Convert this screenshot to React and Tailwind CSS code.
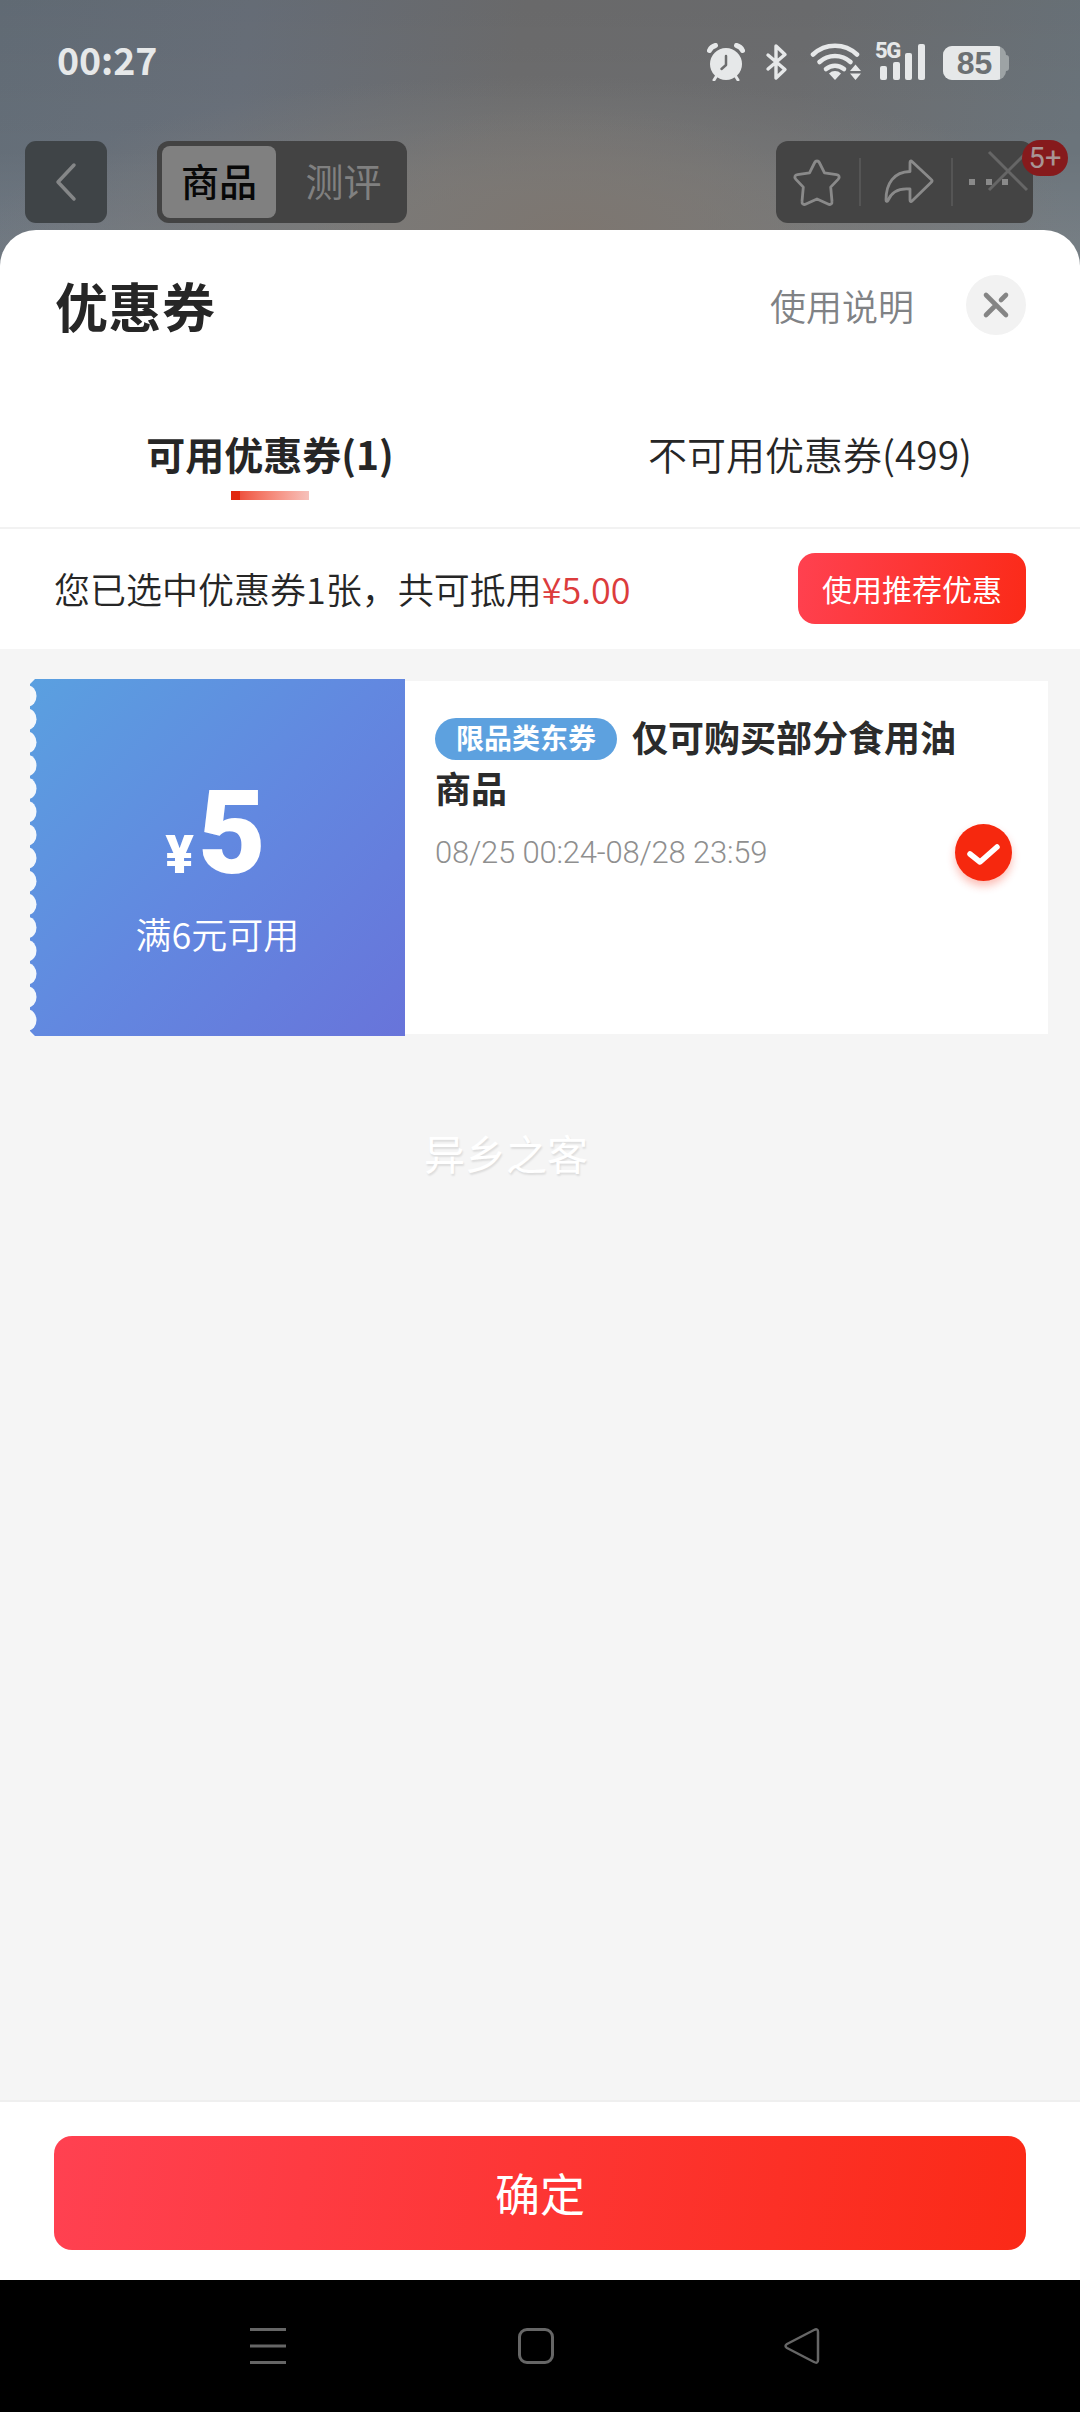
import React from "react";

function StatusIcons() {
  return (
    <div className="flex h-[38px] items-start text-[#e6e8e9]">
      <svg width="38" height="38" viewBox="0 0 38 38" fill="none">
        <circle cx="19" cy="21" r="16" fill="currentColor" />
        <path d="M2.500 7.500a9 9 0 0 1 6-5M29.500 2.500a9 9 0 0 1 6 5" stroke="currentColor" strokeWidth="5" strokeLinecap="round" />
        <path d="M9.500 33 7 37M28.500 33l2.500 4" stroke="currentColor" strokeWidth="3" strokeLinecap="round" />
        <path d="M19 13v9L14.500 26" stroke="#6c6d6e" strokeWidth="2.500" strokeLinecap="round" strokeLinejoin="round" />
      </svg>
      <svg className="ml-[20px]" width="24" height="38" viewBox="0 0 24 38" fill="none" stroke="currentColor" strokeWidth="3.400" strokeLinejoin="round" strokeLinecap="round">
        <path d="m3 12 17 14.500L11 35V3l9 8.500L3 26" />
      </svg>
      <svg className="ml-[21px]" width="54" height="38" viewBox="0 0 54 38" fill="none">
        <g stroke="currentColor" strokeWidth="4.600" strokeLinecap="round">
          <path d="M3 11.500a32 32 0 0 1 44 0" />
          <path d="M9.500 19a23 23 0 0 1 31 0" />
          <path d="M16 26a14 14 0 0 1 18 0" />
        </g>
        <path d="m25 37-6-6.500a8.500 8.500 0 0 1 12 0z" fill="currentColor" />
        <path d="m45.500 21.500 5.500 6.500H40zM45.500 37l5.500-6.500H40z" fill="currentColor" />
      </svg>
      <div className="relative ml-[12px] h-[38px] w-[50px]">
        <span className="absolute -left-px -top-px font-['Roboto'] text-[22px] font-extrabold leading-[18px] tracking-[-1.5px]">5G</span>
        <div className="flex h-[37px] items-end gap-[5.500px] pl-[4px]">
          <i className="h-[14px] w-[7px] rounded-[2px] bg-current" />
          <i className="h-[18px] w-[7px] rounded-[2px] bg-current" />
          <i className="h-[27px] w-[7px] rounded-[2px] bg-current" />
          <i className="h-[36px] w-[7px] rounded-[2px] bg-current" />
        </div>
      </div>
      <div className="ml-[17px] mt-[3px] flex items-center">
        <div className="flex h-[34px] w-[63px] overflow-hidden rounded-[9px] bg-[#9da3a5]">
          <div className="flex w-[57px] items-center justify-center bg-[#e6e8e9] pl-[6px] font-['Liberation_Sans'] text-[32px] font-bold leading-none text-[#6c7073]">85</div>
        </div>
        <div className="h-[16px] w-[3px] rounded-r-[3px] bg-[#9da3a5]" />
      </div>
    </div>
  );
}

function StatusBar() {
  return (
    <div className="flex h-[141px] justify-between pl-[57px] pr-[71px] pt-[43px]">
      <span className="-mt-[3px] h-[38px] font-['Noto_Sans_CJK_SC'] text-[37.500px] font-bold leading-[38px] tracking-[-0.1px] text-[#e6e8e9]">00:27</span>
      <StatusIcons />
    </div>
  );
}

function ProductBar() {
  return (
    <div className="flex h-[82px] pl-[25px] pr-[47px]">
      <div className="flex w-[82px] items-center justify-center rounded-[11px] bg-[#3f4447]">
        <svg width="82" height="82" viewBox="0 0 82 82" fill="none" stroke="#858788" strokeWidth="3.500" strokeLinecap="round" strokeLinejoin="round">
          <path d="M49 24 33 41l16 17" />
        </svg>
      </div>
      <div className="ml-[50px] flex w-[250px] rounded-[12px] bg-[#434343] p-[5px] text-[38px] leading-[68px]">
        <div className="w-[114px] rounded-[8px] bg-[#808080] text-center font-medium text-[#080808]">商品</div>
        <div className="flex-1 pl-[9px] text-center text-[#808080]">测评</div>
      </div>
      <div className="relative ml-auto flex w-[257px] items-center rounded-[12px] bg-[#444444]">
        <svg width="257" height="82" viewBox="0 0 257 82" fill="none" stroke="#8a8a8a" strokeWidth="2.800" strokeLinejoin="round">
          <path d="M41 20c1 0 1.800.5 2.300 1.500l5.200 10.300 12 1.800c2.600.4 3.600 2.700 1.800 4.500l-7.600 8 1.300 14.400c.3 2.500-1.800 3.700-4 2.500L41 58l-11 5c-2.200 1.200-4.300 0-4-2.500l1.300-14.400-7.600-8c-1.800-1.800-.8-4.100 1.800-4.500l12-1.800 5.200-10.300c.5-1 1.300-1.500 2.300-1.500z" />
          <path d="M134 21.500c0-1.500 1-2 2-1l19.500 18.200c.8.700.8 1.600 0 2.400L136 60c-1 1-2 .5-2-1V48c-10-1-18 1.500-22 11.500-1 1.500-2 1-2-.5 0-17 8-28 24-28.500z" />
          <path d="M84 17v48M176 17v48" stroke="#555" strokeWidth="2" />
          <path d="M193 41h6M210 41h6M226 41h6" stroke="#8a8a8a" strokeWidth="6" />
          <path d="m213 11 38 38M251 11l-38 38" stroke="#666" strokeWidth="3" />
        </svg>
        <div className="absolute -top-px left-[246px] h-[36px] w-[46px] rounded-full bg-[#861a1c] text-center font-[Roboto] text-[29px] leading-[36px] text-[#a89595]">5+</div>
      </div>
    </div>
  );
}

function SheetHeader() {
  return (
    <div className="flex h-[150px] items-center pl-[55px] pr-[54px]">
      <h1 className="text-[53px] font-bold leading-[60px] tracking-[0.5px] text-[#262626]">优惠券</h1>
      <span className="ml-auto text-[36px] font-[350] leading-[60px] text-[#808285]">使用说明</span>
      <div className="ml-[52px] flex size-[60px] items-center justify-center rounded-full bg-[#f2f2f2]">
        <svg width="30" height="30" viewBox="0 0 30 30" stroke="#858585" strokeWidth="4.600" strokeLinecap="round">
          <path d="m5 5 20 20M25 5l-5 5M15 15 5 25" />
        </svg>
      </div>
    </div>
  );
}

function Tabs() {
  return (
    <div className="flex h-[149px] border-b-2 border-[#f2f2f2] pt-[43px] text-[39px] leading-[60px] text-[#262626]">
      <div className="flex flex-1 flex-col items-center">
        <span className="font-bold">可用优惠券(1)</span>
        <div className="mt-[8px] flex h-[9px] w-[78px]">
          <i className="w-[9px] bg-[#e1280f]" />
          <i className="flex-1 bg-linear-to-r from-[#ee523f] to-[#f6c1bb]" />
        </div>
      </div>
      <div className="flex flex-1 justify-center font-[350]">不可用优惠券(499)</div>
    </div>
  );
}

function SummaryRow() {
  return (
    <div className="flex h-[120px] items-center justify-between pb-[2px] pl-[54px] pr-[54px]">
      <p className="text-[36px] font-[350] leading-[60px] text-[#262626]">
        您已选中优惠券1张，共可抵用<span className="text-[#dc3c3c]">¥5.00</span>
      </p>
      <button className="h-[71px] w-[228px] rounded-[17px] bg-linear-[100deg,#ff4150,#fb2a18] text-[30px] leading-[68px] text-white">使用推荐优惠</button>
    </div>
  );
}

const NOTCHES = Array.from({ length: 15 }, (_, i) => 17 + i * 23.15);

function Coupon() {
  return (
    <div className="mx-[30px] flex h-[357px] w-[1018px] items-center">
      <div className="relative flex h-[357px] w-[375px] shrink-0 flex-col items-center bg-linear-[133deg,#5aa0e0,#6288e0_50%,#6874da] text-white">
        <svg className="absolute left-0 top-0" width="7" height="357" viewBox="0 0 7 357" fill="#f5f8fb">
          {NOTCHES.map((y) => (
            <ellipse key={y} cx="-2" cy={y} rx="8.500" ry="10.500" />
          ))}
          <path d="M0 0h5L0 5zM0 357h5L0 352z" />
        </svg>
        <div className="mt-[96px] flex h-[117px] items-baseline pr-[8px] leading-[117px]">
          <span className="mr-[4px] font-[Roboto] text-[53px] font-black">¥</span>
          <span className="font-[Roboto] text-[117px] font-black tracking-[-4px]">5</span>
        </div>
        <div className="mt-[11px] text-[36px] font-[350] leading-[60px]">满6元可用</div>
      </div>
      <div className="flex h-[353px] min-w-0 flex-1 bg-white pl-[30px] pr-[36px]">
        <div className="min-w-0 flex-1 pt-[30px]">
          <div className="whitespace-nowrap text-[36px] font-bold leading-[51px] text-[#2b2b2b]">
            <div className="flex items-center">
              <span className="mt-[5px] h-[42px] w-[182px] shrink-0 rounded-full bg-[#5da1df] text-center text-[28px] leading-[39px] text-white">限品类东券</span>
              <span className="ml-[15px]">仅可购买部分食用油</span>
            </div>
            <div>商品</div>
          </div>
          <div className="mt-[15px] whitespace-nowrap font-[Roboto] text-[31px] font-light leading-[50px] tracking-[-0.2px] text-[#8f8f8f]">08/25 00:24-08/28 23:59</div>
        </div>
        <div className="mt-[143px] flex size-[57px] shrink-0 items-center justify-center rounded-full bg-[#f6280e] shadow-[0_5px_9px_rgba(246,40,14,0.3)]">
          <svg width="57" height="57" viewBox="0 0 57 57" fill="none" stroke="#fff" strokeWidth="5.500" strokeLinecap="round" strokeLinejoin="round">
            <path d="m15 30 10 8L42 23" />
          </svg>
        </div>
      </div>
    </div>
  );
}

function NavBar() {
  return (
    <div className="flex h-[132px] items-center bg-black pl-[250px] text-[#666]">
      <svg width="36" height="36" viewBox="0 0 36 36" stroke="currentColor" strokeWidth="3">
        <path d="M0 1.500h36M0 18h36M0 34.500h36" />
      </svg>
      <div className="ml-[232px] size-[36px] rounded-[9px] border-[3px] border-current" />
      <svg className="ml-[230px]" width="36" height="36" viewBox="0 0 36 36" fill="none" stroke="currentColor" strokeWidth="2.500" strokeLinejoin="round">
        <path d="M3 16Q0 18 3 20l27 14q4 2 4-2V4q0-4-4-2z" />
      </svg>
    </div>
  );
}

export default function App() {
  return (
    <div className="flex h-[2412px] w-[1080px] flex-col overflow-hidden bg-[radial-gradient(ellipse_260px_130px_at_570px_235px,#7d7670_0%,transparent_100%),radial-gradient(ellipse_560px_170px_at_540px_245px,#7a7a79_0%,#7a7a79_30%,transparent_100%),linear-gradient(180deg,rgba(0,0,0,0.04)_0px,rgba(0,0,0,0)_150px,rgba(255,255,255,0.07)_240px),linear-gradient(100deg,#646e78_0px,#69707a_250px,#6d6d6e_520px,#6d6e70_800px,#6b747b_1080px)] font-['Noto_Sans_CJK_SC',sans-serif]">
      <StatusBar />
      <ProductBar />
      <div className="mt-[7px] flex flex-1 flex-col overflow-hidden rounded-t-[36px] bg-white">
        <SheetHeader />
        <Tabs />
        <SummaryRow />
        <div className="flex flex-1 flex-col bg-[#f5f5f5] pt-[30px]">
          <Coupon />
          <div className="ml-[424px] mt-[86px] text-[41px] leading-[60px] text-white [text-shadow:1px_2px_2px_rgba(0,0,0,0.1)]">异乡之客</div>
        </div>
        <div className="h-[180px] border-t-2 border-[#efefef] bg-white px-[54px] pt-[34px]">
          <button className="h-[114px] w-full rounded-[18px] bg-linear-[98deg,#ff4151,#fb2a17] text-[45px] leading-[110px] text-white">确定</button>
        </div>
      </div>
      <NavBar />
    </div>
  );
}
